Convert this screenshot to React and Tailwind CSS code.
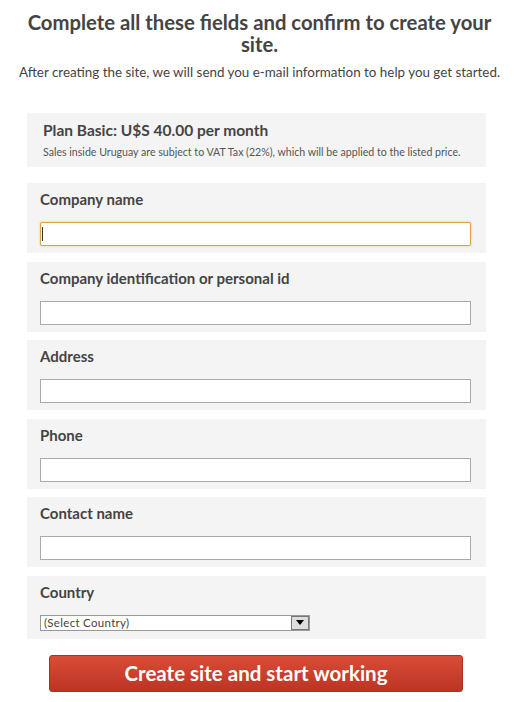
import React from 'react';

const fields = [
  { label: 'Company name', focused: true },
  { label: 'Company identification or personal id' },
  { label: 'Address' },
  { label: 'Phone' },
  { label: 'Contact name' },
];

function Field({ label, focused }) {
  return (
    <div className="bg-[#f4f4f4] px-[13px] pt-[6px] pb-[7px] mb-[8.6px]">
      <div className="text-[15px] leading-[20px] font-bold text-[#444]">{label}</div>
      <div
        className={
          focused
            ? 'mt-[13px] h-[24px] w-[431px] bg-white border border-[#dba548] rounded-[2px] shadow-[0_0_2px_#e8b650] flex items-center pl-[1px]'
            : 'mt-[13px] h-[24px] w-[431px] bg-white border border-[#aaa]'
        }
      >
        {focused && <span className="w-px h-[14px] bg-[#333]" />}
      </div>
    </div>
  );
}

export default function App() {
  return (
    <div className="w-[519px] h-[702px] bg-white font-['Lato',sans-serif] overflow-hidden">
      <h1 className="pt-[11px] text-center text-[20.3px] leading-[22px] font-bold text-[#444] px-[20px]">
        Complete all these fields and confirm to create your site.
      </h1>
      <p className="mt-[9px] text-center text-[13.4px] leading-[16px] text-[#444]">
        After creating the site, we will send you e-mail information to help you get started.
      </p>

      <div className="ml-[27px] w-[459px] mt-[33px]">
        <div className="bg-[#f4f4f4] h-[54px] px-[16px] pt-[7px]">
          <div className="text-[15.5px] leading-[20px] font-bold text-[#444]">
            Plan Basic: U$S 40.00 per month
          </div>
          <div className="mt-[5px] text-[10.6px] leading-[14px] text-[#555]">
            Sales inside Uruguay are subject to VAT Tax (22%), which will be applied to the listed price.
          </div>
        </div>

        <div className="mt-[16px]">
          {fields.map((f, i) => (
            <Field key={i} label={f.label} focused={f.focused} />
          ))}
          <div className="bg-[#f4f4f4] h-[63px] px-[13px] pt-[6px]">
            <div className="text-[15px] leading-[20px] font-bold text-[#444]">Country</div>
            <div className="mt-[13px] h-[16px] w-[270px] bg-white border border-[#999] flex items-center">
              <span className="flex-1 pl-[3px] text-[11.5px] leading-[14px] text-[#444] tracking-[0.3px]">(Select Country)</span>
              <span className="w-[18px] h-[14px] border border-[#777] bg-[#ddd] flex items-center justify-center">
                <svg width="8" height="5" viewBox="0 0 8 5">
                  <path d="M0 0 L8 0 L4 5 Z" fill="#000" />
                </svg>
              </span>
            </div>
          </div>
        </div>
      </div>

      <div className="mt-[16px] ml-[49px] w-[414px] h-[37px] rounded-[3px] bg-gradient-to-b from-[#d94c38] to-[#bc3424] border border-[#b0301f] flex items-center justify-center text-white text-[20.5px] font-bold">
        Create site and start working
      </div>
    </div>
  );
}
